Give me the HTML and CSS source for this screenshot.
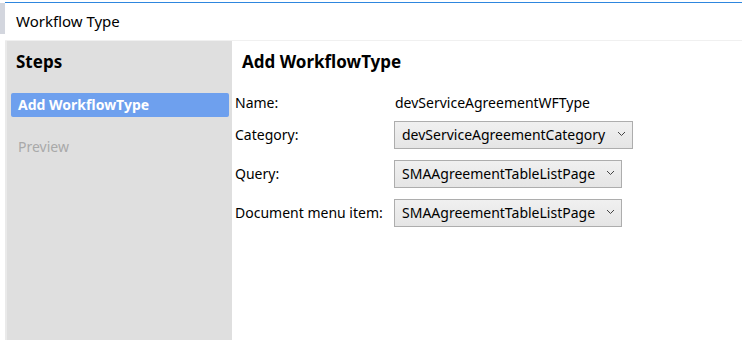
FILE: index.html
```html
<!DOCTYPE html>
<html lang="en">
<head>
    <meta charset="UTF-8">
    <title>Workflow Type</title>
    <link rel="stylesheet" href="styles.css">
</head>
<body>
    <div class="edge">
        <div class="edge-tab"></div>
    </div>

    <div class="window">
        <div class="top-line"></div>

        <div class="dialog-title">Workflow Type</div>

        <div class="wizard">
            <div class="steps">
                <h2>Steps</h2>
                <div class="step active">Add WorkflowType</div>
                <div class="step disabled">Preview</div>
            </div>

            <div class="page">
                <h2>Add WorkflowType</h2>
                <div class="form">
                    <label>Name:</label>
                    <span class="value">devServiceAgreementWFType</span>

                    <label>Category:</label>
                    <div class="combo combo-wide">
                        <span>devServiceAgreementCategory</span>
                        <svg class="chev" width="9" height="6" viewBox="0 0 9 6"><path d="M1 1 L4.5 4.5 L8 1" fill="none" stroke="#444" stroke-width="1"/></svg>
                    </div>

                    <label>Query:</label>
                    <div class="combo">
                        <span>SMAAgreementTableListPage</span>
                        <svg class="chev" width="9" height="6" viewBox="0 0 9 6"><path d="M1 1 L4.5 4.5 L8 1" fill="none" stroke="#444" stroke-width="1"/></svg>
                    </div>

                    <label>Document menu item:</label>
                    <div class="combo">
                        <span>SMAAgreementTableListPage</span>
                        <svg class="chev" width="9" height="6" viewBox="0 0 9 6"><path d="M1 1 L4.5 4.5 L8 1" fill="none" stroke="#444" stroke-width="1"/></svg>
                    </div>
                </div>
            </div>
        </div>
    </div>
</body>
</html>
```

FILE: styles.css
```css
body {
    margin: 0;
    font-family: "Noto Sans", "Open Sans", sans-serif;
    font-size: 14px;
    color: #000;
    background: #fff;
    width: 742px;
    height: 340px;
    overflow: hidden;
    display: flex;
}

/* grey tab peeking out on the far left */
.edge {
    width: 5px;
    flex-shrink: 0;
}
.edge-tab {
    margin-top: 3px;
    height: 31px;
    background: #d3d6de;
}

.window {
    flex: 1;
    display: flex;
    flex-direction: column;
}
.top-line {
    height: 2px;
    background: #fff;
    border-bottom: 1px solid #2e86de;
}

.dialog-title {
    height: 37px;
    line-height: 37px;
    padding-left: 11px;
    font-size: 15px;
    border-bottom: 1px solid #f0f0f0;
}

.wizard {
    flex: 1;
    display: flex;
    border-left: 2px solid #eaeaea;
}

.steps {
    width: 225px;
    background: #dfdfdf;
    padding: 0 3px 0 4px;
    box-sizing: border-box;
}
.steps h2 {
    margin: 0;
    padding: 9px 0 0 5px;
    height: 50px;
    box-sizing: border-box;
    font-size: 17px;
    font-weight: 700;
}
.step {
    height: 24px;
    line-height: 24px;
    padding-left: 7px;
    font-size: 14px;
    border-radius: 2px;
}
.step.active {
    margin-top: 2px;
    background: #6ea0ee;
    color: #fff;
    font-weight: 700;
}
.step.disabled {
    margin-top: 18px;
    color: #a9a9a9;
}

.page {
    flex: 1;
    padding-left: 3px;
}
.page h2 {
    margin: 0;
    padding: 9px 0 0 7px;
    height: 50px;
    box-sizing: border-box;
    font-size: 17px;
    font-weight: 700;
}
.form {
    display: grid;
    grid-template-columns: 159px auto;
    align-items: center;
    justify-content: start;
    row-gap: 11px;
    padding-top: 5px;
    line-height: 14px;
}
.form label {
    font-size: 14px;
}
.value {
    padding-left: 1px;
}
.combo {
    display: flex;
    align-items: center;
    justify-content: space-between;
    width: 228px;
    height: 28px;
    box-sizing: border-box;
    padding: 0 6px 0 7px;
    border: 1px solid #adadad;
    background: linear-gradient(#f0f0f0, #e5e5e5);
}
.combo-wide {
    width: 239px;
}
.chev {
    margin-bottom: 2px;
}
```
